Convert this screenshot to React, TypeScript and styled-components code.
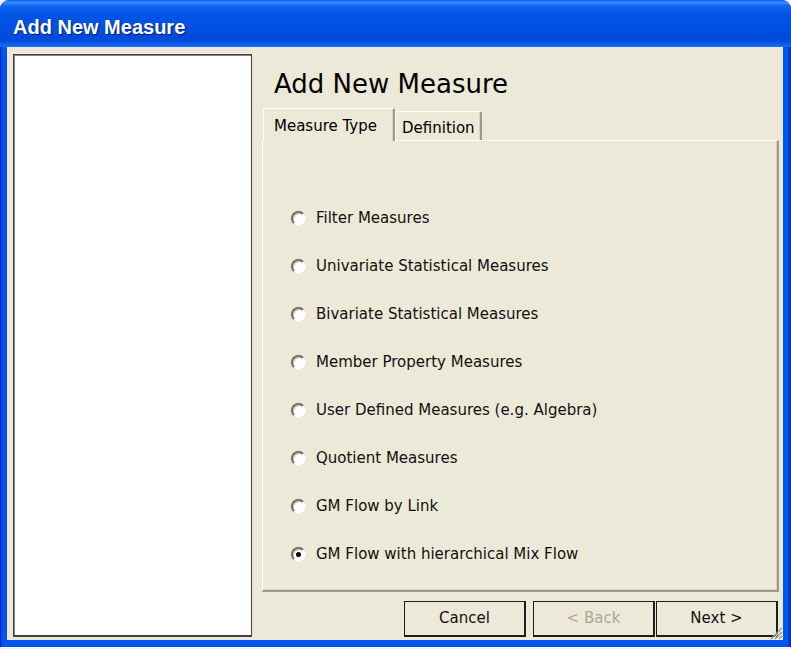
import React from "react";
import styled, { createGlobalStyle } from "styled-components";

const measureTypes = [
  "Filter Measures",
  "Univariate Statistical Measures",
  "Bivariate Statistical Measures",
  "Member Property Measures",
  "User Defined Measures (e.g. Algebra)",
  "Quotient Measures",
  "GM Flow by Link",
  "GM Flow with hierarchical Mix Flow",
];

const GlobalStyle = createGlobalStyle`
  html, body {
    margin: 0;
    padding: 0;
    background: #f4f4f4;
  }
  #root {
    width: 791px;
    height: 649px;
  }
`;

export default function App() {
  const [selected, setSelected] = React.useState(measureTypes.length - 1);

  return (
    <>
      <GlobalStyle />
      <Window>
        <TitleBar>
          <TitleText>Add New Measure</TitleText>
        </TitleBar>
        <Frame>
          <Body>
            <SidePanel />
            <MainColumn>
              <Heading>Add New Measure</Heading>
              <TabStrip>
                <Tab $active>Measure Type</Tab>
                <Tab>Definition</Tab>
              </TabStrip>
              <TabPanel>
                {measureTypes.map((label, index) => (
                  <OptionRow key={label} onClick={() => setSelected(index)}>
                    <Radio $checked={index === selected} />
                    <OptionLabel>{label}</OptionLabel>
                  </OptionRow>
                ))}
              </TabPanel>
              <ButtonRow>
                <Button>Cancel</Button>
                <ButtonPair>
                  <Button disabled>&lt; Back</Button>
                  <Button>Next &gt;</Button>
                </ButtonPair>
              </ButtonRow>
            </MainColumn>
            <Grip width="14" height="14" viewBox="0 0 14 14">
              <path d="M13 2 L2 13 M13 6 L6 13 M13 10 L10 13" stroke="#9c9a8c" strokeWidth="1.5" />
              <path d="M14 3 L3 14 M14 7 L7 14 M14 11 L11 14" stroke="#fff" strokeWidth="1" />
            </Grip>
          </Body>
        </Frame>
      </Window>
    </>
  );
}

const Window = styled.div`
  width: 791px;
  height: 647px;
  display: flex;
  flex-direction: column;
  border-radius: 9px 9px 0 0;
  overflow: hidden;
  background: #0052e6;
`;

const TitleBar = styled.div`
  height: 47px;
  flex-shrink: 0;
  display: flex;
  align-items: center;
  padding-left: 13px;
  padding-top: 8px;
  box-sizing: border-box;
  background: linear-gradient(
    to bottom,
    #0a5ff2 0%,
    #3b8eff 5%,
    #1366f0 12%,
    #0055e5 30%,
    #0050e0 60%,
    #004ad9 86%,
    #0a5cf0 94%,
    #1b6dff 100%
  );
`;

const TitleText = styled.div`
  font-family: "Liberation Sans", Arial, sans-serif;
  font-weight: bold;
  font-size: 20px;
  color: #ffffff;
  text-shadow: 1px 1px 1px #0a1e78;
`;

const Frame = styled.div`
  flex: 1;
  display: flex;
  padding: 0 8px 7px 7px;
  background: linear-gradient(
    to right,
    #0019b0 0px,
    #0055ea 2px,
    #0055ea calc(100% - 3px),
    #0019b0 100%
  );
`;

const Body = styled.div`
  position: relative;
  flex: 1;
  display: flex;
  gap: 10px;
  padding: 7px 3px 3px 6px;
  background: #ece9d8;
  font-family: "DejaVu Sans", Tahoma, sans-serif;
  color: #000;
`;

const SidePanel = styled.div`
  width: 239px;
  box-sizing: border-box;
  background: #ffffff;
  border: 1px solid #404040;
  border-bottom-width: 2px;
  box-shadow: inset 1px 1px 0 #808080;
`;

const MainColumn = styled.div`
  flex: 1;
  display: flex;
  flex-direction: column;
`;

const Heading = styled.h1`
  margin: 15px 0 0 12px;
  font-size: 26px;
  font-weight: normal;
  line-height: 30px;
`;

const TabStrip = styled.div`
  display: flex;
  align-items: flex-end;
  margin-top: 9px;
  padding-left: 1px;
  position: relative;
  z-index: 1;
`;

const Tab = styled.div<{ $active?: boolean }>`
  box-sizing: border-box;
  height: ${(p) => (p.$active ? "33px" : "29px")};
  margin-bottom: ${(p) => (p.$active ? "-1px" : "0")};
  padding: ${(p) => (p.$active ? "8px 16px 0 10px" : "7px 5px 0 6px")};
  font-size: 15px;
  line-height: 18px;
  background: #ece9d8;
  border-top: 1px solid #ffffff;
  border-left: 1px solid #ffffff;
  border-right: 2px solid #9d9a8c;
  border-radius: 2px 2px 0 0;
  box-shadow: inset -1px 0 0 #d6d3c4;
`;

const TabPanel = styled.div`
  height: 452px;
  box-sizing: border-box;
  display: flex;
  flex-direction: column;
  padding: 53px 0 0 28px;
  border-top: 1px solid #ffffff;
  border-left: 1px solid #ffffff;
  border-right: 2px solid #9d9a8c;
  border-bottom: 2px solid #9d9a8c;
  margin-right: 1px;
  box-shadow: inset -1px -1px 0 #d6d3c4;
`;

const OptionRow = styled.label`
  height: 48px;
  display: flex;
  align-items: center;
  gap: 10px;
  cursor: default;
`;

const Radio = styled.span<{ $checked?: boolean }>`
  width: 15px;
  height: 15px;
  box-sizing: border-box;
  border-radius: 50%;
  background: #ffffff;
  border: 2px solid;
  border-color: #6e6e6e #ffffff #ffffff #6e6e6e;
  box-shadow: inset 1px 1px 0 #c8c6bc, 0 0 0 0.5px #d8d5c8;
  display: flex;
  align-items: center;
  justify-content: center;

  &::after {
    content: "";
    width: 5px;
    height: 5px;
    border-radius: 50%;
    background: #000;
    display: ${(p) => (p.$checked ? "block" : "none")};
  }
`;

const OptionLabel = styled.span`
  font-size: 15px;
  line-height: 18px;
  color: #111;
`;

const ButtonRow = styled.div`
  display: flex;
  justify-content: flex-end;
  gap: 7px;
  margin-top: 9px;
  padding-right: 2px;
`;

const ButtonPair = styled.div`
  display: flex;
  gap: 1px;
`;

const Button = styled.button`
  width: 122px;
  height: 36px;
  box-sizing: border-box;
  background: #ece9d8;
  border: 1px solid #1c1c1c;
  border-right-width: 2px;
  border-bottom-width: 2px;
  font-family: "DejaVu Sans", Tahoma, sans-serif;
  font-size: 15px;
  color: #111;
  padding: 0 0 2px;

  &:disabled {
    color: #aca899;
  }
`;

const Grip = styled.svg`
  position: absolute;
  right: 0;
  bottom: 0;
`;
